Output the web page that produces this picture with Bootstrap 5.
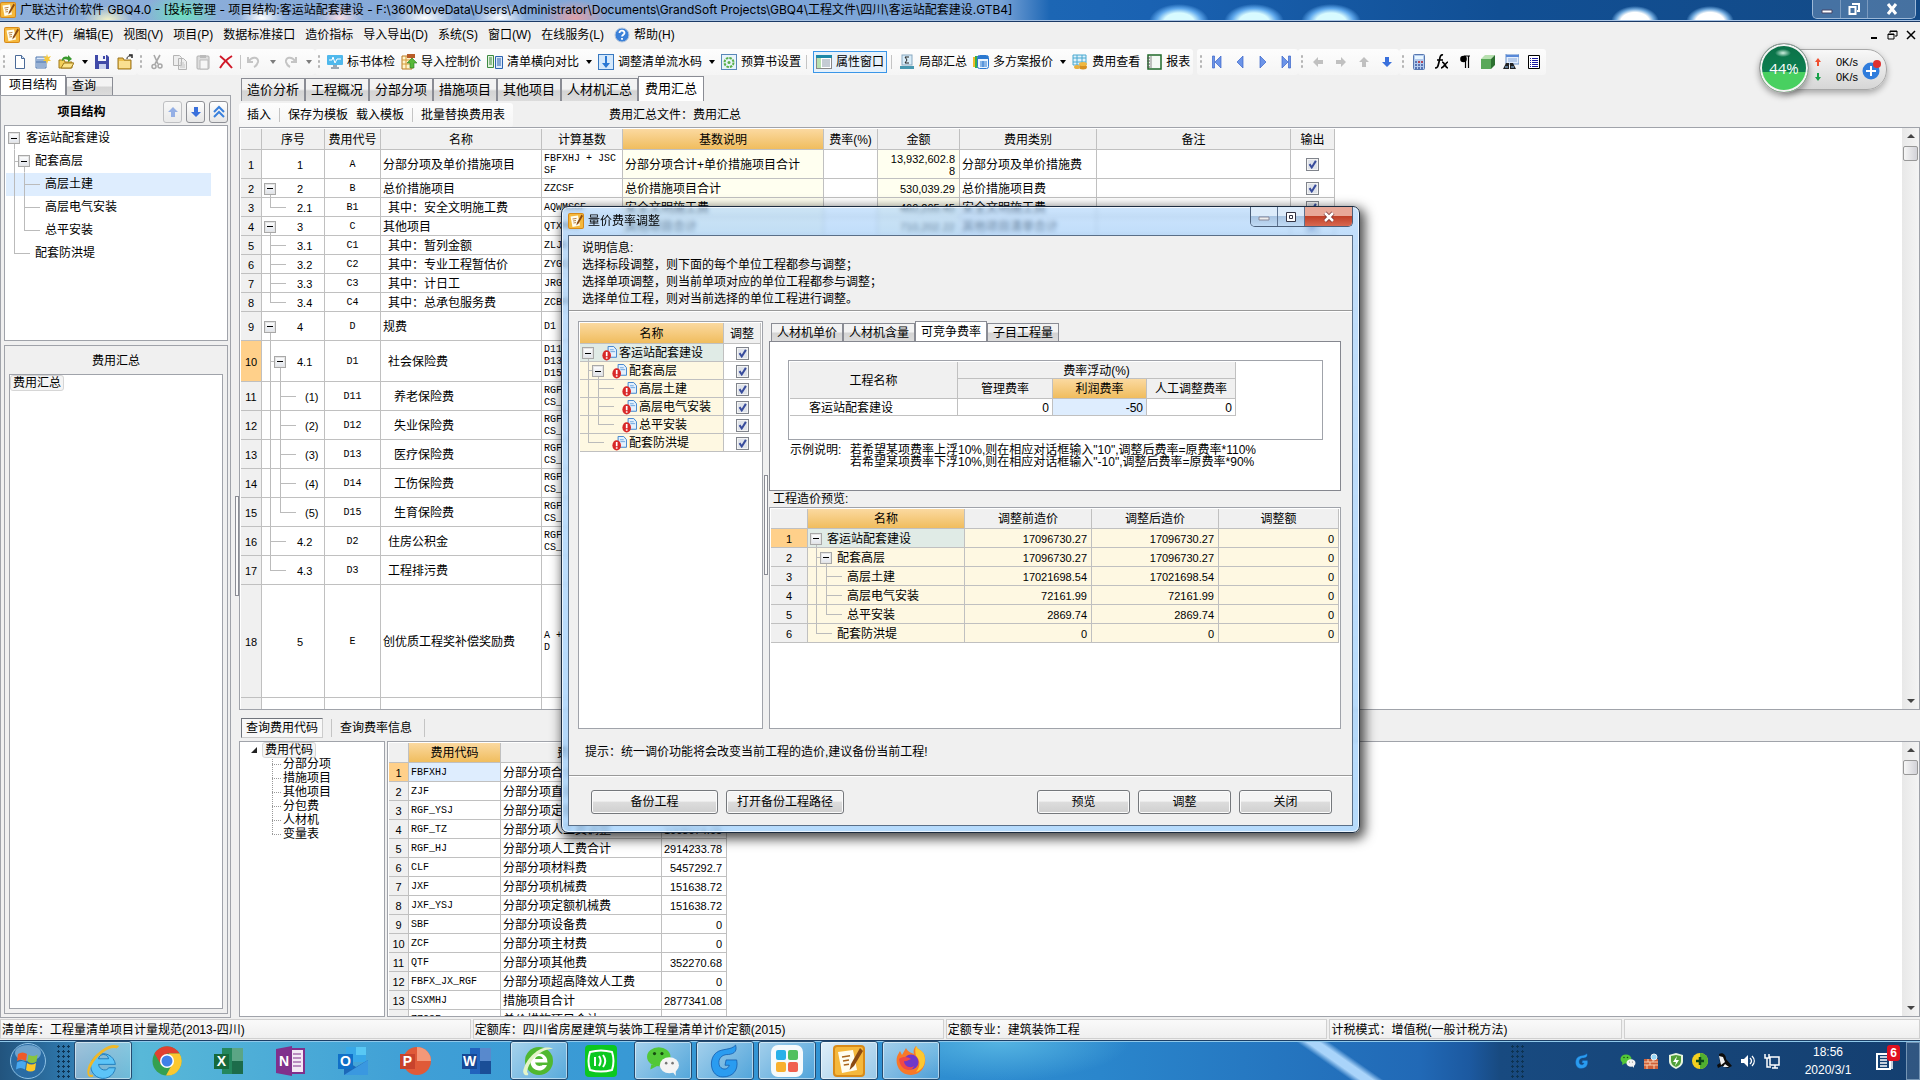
<!DOCTYPE html>
<html lang="zh-CN">
<head>
<meta charset="utf-8">
<meta name="viewport" content="width=device-width, initial-scale=1">
<title>广联达计价软件 GBQ4.0</title>
<link href="https://cdn.jsdelivr.net/npm/bootstrap@5.3.0/dist/css/bootstrap.min.css" rel="stylesheet">
<style>
:root{--line:#c0c0c0;--edge:#a0a3aa;--face:#f0f0f0}
body{font:12px/16px "Liberation Sans","Noto Sans CJK SC",sans-serif;color:#000;background:var(--face);overflow:hidden}
button{font:inherit;color:inherit;border:0;background:none;padding:0;white-space:nowrap}
svg{display:block;flex:none}
a{color:inherit;text-decoration:none}
.ic{width:16px;height:16px}
.bx{background:#fff;border:1px solid var(--edge)}
.mono{font-family:"Liberation Mono","Noto Sans CJK SC",monospace;font-size:10px}
.numtx{font-size:11px}
/* title bar */
.titlebar{height:22px;border-bottom:1px solid #1b3a66;box-shadow:inset 0 -1px #a9c4e4;
 background:
 radial-gradient(30px 18px at 1179px 22px,#d8fbff 50%,#5fa8ec 75%,transparent),radial-gradient(30px 18px at 1254px 22px,#d8fbff 50%,#5fa8ec 75%,transparent),radial-gradient(30px 18px at 1331px 22px,#d8fbff 50%,#5fa8ec 75%,transparent),
 radial-gradient(24px 16px at 1635px 22px,#fff 60%,#6fa8dc 80%,transparent),radial-gradient(24px 16px at 1710px 22px,#fff 60%,#6fa8dc 80%,transparent),
 radial-gradient(26px 14px at 108px 20px,#f3f2c8,transparent),radial-gradient(38px 22px at 182px 14px,#6fe0c0,transparent),radial-gradient(24px 14px at 262px 18px,#fff,transparent),radial-gradient(24px 14px at 340px 18px,#f5dde6,transparent),radial-gradient(30px 14px at 425px 18px,#fff,transparent),radial-gradient(26px 14px at 500px 18px,#fff,transparent),radial-gradient(34px 18px at 575px 18px,#e0a0a8,transparent),
 linear-gradient(90deg,#8fb0da 0,#84a8d8 500px,#7aa4d8 1000px,#1c66b4 1050px,#1a62b2 1150px,#114f94 1500px,#134a86 100%)}
.caption{font-family:Inter,"Noto Sans CJK SC",sans-serif}
.winctl{align-self:flex-start;height:19px;border:1px solid #9db9d8;border-top:0;border-radius:0 0 5px 5px;overflow:hidden}
.winctl button{display:grid;place-items:center;height:18px;background:rgba(255,255,255,.22);border-right:1px solid #7b9bc0}
.winctl button:last-child{border:0}
/* menu and tool bars */
.menubar{height:28px}
.menus{gap:10px}
.toolrow{height:26px}
.strip{background:linear-gradient(#fdfdfd,#f5f5f5);border-radius:3px;height:26px}
.grip{width:9px;height:16px;background:radial-gradient(circle,#b4b4b4 1px,transparent 1.5px) 2px 0/4px 5px repeat-y;flex:none}
.tb{display:flex;align-items:center;gap:4px;padding:0 3px;height:22px}
.tb.only{padding:0 4px 0 3px}
.tb.on{border:1px solid #3a96e8;background:#e6f1fb;padding:0 2px}
.caret{width:13px;height:22px;display:grid;place-items:center}
.caret::before{content:"";border:3px solid transparent;border-top:4px solid #000;border-bottom:0}
.vsep{width:1px;height:14px;background:#c4c4c4}
.vsep.tight{margin:0 2px}
/* tabs */
.tab{font-size:13px;line-height:16px;padding:0 5px;height:23px;border:1px solid #8a8c94;border-bottom:0;background:linear-gradient(#f3f3f3 45%,#d4d4d4 55%,#dcdcdc)}
.tab.on{background:#fff;height:25px;padding:0 6px}
.tab.sm{font-size:12px;height:18px}
.tab.sm.on{height:20px;padding:0 5px}
/* side panel */
.side{width:231px}
.sidebox{border:1px solid var(--edge);padding:5px 2px 3px 3px}
.sidehead{padding-bottom:2px}
.sqb{width:19px;height:22px;border:1px solid #8e9096;border-radius:3px;background:linear-gradient(#fff,#e6e6e6);display:grid;place-items:center}
.split{width:4px;height:100px;border:1px solid #8a8c94;background:#fafafa;align-self:center}
/* trees: --a is the x of the first guide line */
.tree{--g:linear-gradient(#bbb,#bbb);--a:8px;--b:calc(var(--a) + 10px);background-repeat:no-repeat}
.t-top{background-image:var(--g);background-size:1px 50%;background-position:var(--a) 100%}
.t-mid{background-image:var(--g),var(--g);background-size:1px 100%,16px 1px;background-position:var(--a) 0,var(--a) 50%}
.t-end{background-image:var(--g),var(--g);background-size:1px 50%,16px 1px;background-position:var(--a) 0,var(--a) 50%}
.t-sub{background-image:var(--g),var(--g),var(--g);background-size:1px 100%,6px 1px,1px 50%;background-position:var(--a) 0,var(--a) 50%,var(--b) 100%}
.t-mid2{background-image:var(--g),var(--g),var(--g);background-size:1px 100%,1px 100%,16px 1px;background-position:var(--a) 0,var(--b) 0,var(--b) 50%}
.t-end2{background-image:var(--g),var(--g),var(--g);background-size:1px 100%,1px 50%,16px 1px;background-position:var(--a) 0,var(--b) 0,var(--b) 50%}
.tgl{width:12px;height:12px;border:1px solid #a8a8a8;outline:1px solid #e4e4e4;outline-offset:-2px;background:linear-gradient(#000,#000) 50% 50%/6px 1px no-repeat,linear-gradient(#fff,#dfe3ea);flex:none}
.row23{height:23px;display:flex;align-items:center;padding-right:4px}
.lead0,.lead1,.lead2{display:inline-flex;align-items:center;flex:none;padding-left:2px}
.ptree{height:216px;padding:1px 16px 0 1px}
.ptree .lead0{width:20px}.ptree .lead1{width:29px;padding-left:12px}.ptree .lead2{width:39px}
/* grids */
.gtab{table-layout:fixed;border-collapse:separate;border-spacing:0;line-height:12px}
.gtab th{font-weight:400;text-align:center;background:#f0f0f0}
.gtab th,.gtab td{border:0 solid var(--line);border-width:0 1px 1px 0;padding:1px 2px 0;overflow:hidden;white-space:nowrap;vertical-align:middle}
.gtab thead th.hot{background:linear-gradient(#fbd9a0,#f0bd5e)}
.gtab tbody th.hot{background:#ffd08a}
.gtab .c{text-align:center}.gtab .r{text-align:right;padding-right:4px}
.gtab .i1{padding-left:7px}.gtab .i2{padding-left:13px}
.gtab .cream{background-color:#fffff0}
.fees .lead0,.fees .lead1{width:35px}.fees .lead2{width:43px}.fees .lead1{padding-left:12px}
.fees td.tree{padding:1px 0 0}
.cell{display:flex;align-items:center}
.h19 tr{height:19px}
.gtab thead .h20{height:20px}.gtab thead .h21{height:21px}
.fees .h19r{height:19px}.fees .h29{height:29px}.fees .h41{height:41px}.fees .h113{height:113px}
.form-check-input[type=checkbox]{width:13px;height:13px;margin:0 auto;border:1px solid #80848c;border-radius:0;box-shadow:inset 0 0 0 1px #f4f4f4;display:block;float:none}
.form-check-input:checked[type=checkbox]{background:#dfe3ea url("data:image/svg+xml,%3Csvg xmlns='http://www.w3.org/2000/svg' viewBox='0 0 13 13'%3E%3Cpath d='M3 6 5.600 10 10.500 2.200' fill='none' stroke='%23384c9c' stroke-width='2.400'/%3E%3C/svg%3E") center/11px 11px no-repeat;border-color:#80848c}
.vscroll{width:17px;background:linear-gradient(90deg,#e8e8e8,#f4f4f4);display:flex;flex-direction:column;align-items:center;padding:6px 0}
.vscroll i{border:4px solid transparent}
.vscroll .up{border-bottom-color:#444;border-top:0}
.vscroll .dn{border-top-color:#444;border-bottom:0;margin-top:auto}
.vscroll b{width:15px;height:15px;border:1px solid #989898;border-radius:2px;background:linear-gradient(90deg,#f6f6f6,#d2d2d8);margin-top:8px}
/* lower area */
.qbar{height:32px;padding:6px 0 0 2px}
.qon{border:1px solid #70747c;border-right-color:#ccc;border-bottom-color:#ccc;background:#f8f8f8;height:20px;padding:0 4px}
.lower{height:276px}
.codes{width:146px;line-height:14px;padding:0 0 0 6px}
.codes .kids{margin:-1px 0 0 21px}
.kids div{padding-left:16px;height:14px;background:repeating-linear-gradient(#999 0 1px,transparent 1px 2px) 5px 0/1px 14px no-repeat,repeating-linear-gradient(90deg,#999 0 1px,transparent 1px 2px) 5px 7px/9px 1px no-repeat}
.kids div:last-child{background-size:1px 7px,9px 1px}
.pick{border:1px solid #d6d6d6;border-radius:3px;background:#f4f4f4;padding:0 2px}
/* status */
.status{height:22px;padding:1px 0}
.status div{border:1px solid #d0d0d0;background:linear-gradient(#fafafa,#efefef);padding:0 1px;line-height:20px}
/* taskbar */
.taskbar{height:40px;border-top:1px solid #1c3f66;box-shadow:inset 0 1px #8fc8ea;color:#fff;
 background:linear-gradient(35deg,transparent 42%,#a9d4fa 47% 53%,transparent 58%) 1265px 0/150px 40px no-repeat,
 radial-gradient(130px 40px at 1000px 0,#55b4e2,transparent),
 linear-gradient(90deg,#22547e 0,#2f79ae 70px,#58b8d8 140px,#3f9fd6 420px,#3294d4 800px,#2a86cc 1100px,#2169b6 1420px,#1c59a0 1470px,#184a80 1500px,#143f70 100%)}
.tk{width:58px;height:39px;margin-right:4px;display:grid;place-items:center;border:1px solid transparent;border-radius:3px}
.tk.run{border-color:#244b70;background:linear-gradient(135deg,rgba(255,255,255,.55),rgba(255,255,255,.15));box-shadow:inset 0 0 0 1px rgba(255,255,255,.5)}
.tk.act{background:linear-gradient(135deg,rgba(255,255,255,.85),rgba(255,255,255,.5))}
.tk.stack{margin-right:6px}
.dots{width:14px;height:34px;background:radial-gradient(circle,#0d3352 1px,transparent 1.4px) 0 0/5px 5px;flex:none}
.badge6{position:absolute;right:-6px;top:-6px;width:13px;height:16px;background:#e01020;border-radius:3px;font-weight:700;text-align:center;line-height:16px}
/* dialog */
.dlg{position:absolute;left:561px;top:206px;width:799px;height:627px;border:1px solid #1c2c40;border-radius:7px;padding:0 6px 6px;
 background:linear-gradient(rgba(160,204,248,.55),rgba(160,204,248,.65) 30px,rgba(164,210,252,.8));
 backdrop-filter:blur(2px);box-shadow:inset 0 0 0 1px rgba(255,255,255,.7),3px 4px 12px 2px rgba(0,0,0,.7)}
.dlgtitle{height:28px}
.dlgctl{align-self:flex-start;border:1px solid #4b5f7a;border-top:0;border-radius:0 0 5px 5px;overflow:hidden}
.dlgctl button{height:19px;width:27px;display:grid;place-items:center;border-right:1px solid #5c7290;background:linear-gradient(#dcebfa 45%,#a8c4e2 50%,#c0daf4)}
.dlgctl .x{width:47px;border:0;background:linear-gradient(#e8a898 45%,#c04028 50%,#d86850)}
.client{background:var(--face);border:1px solid #5a6f88;flex:1;min-height:0}
.info{line-height:17px;height:75px;padding:4px 0 0 13px;border-bottom:1px solid #999;box-shadow:0 1px #fff}
.panes{padding:10px 11px 0 9px;height:418px}
.dtree{width:185px}
.dtree tbody tr{height:18px}
.dtree .lead0{width:21px}.dtree .lead1{width:31px;padding-left:12px}.dtree .lead2{width:41px}
.dtree td.tree,.ptab td.tree{background-color:#fef8e2;padding:1px 0 0}
.dtree .ic{width:15px;height:15px;margin:0 2px 0 1px}
.dtree td.tree.sel,.ptab td.tree.sel{background-color:#e0ebe6}
.ptab td{background-color:#fef8e2}
.ptab .lead0{width:19px}.ptab .lead1{width:29px;padding-left:12px}.ptab .lead2{width:39px}
.cellin{width:100%;border:0;background:none;padding:0 1px;text-align:right;font:inherit;line-height:12px;height:14px;display:block}
.pb{height:24px;border:1px solid #75787c;border-radius:3px;background:linear-gradient(#f4f4f4 45%,#dcdcdc 52%,#cfcfcf);box-shadow:inset 0 0 0 1px #fbfbfb}
.w93{width:93px}.w118{width:118px}.w127{width:127px}
/* speed widget */
.speed{position:absolute;left:1759px;top:43px;width:130px}
.pill{height:41px;margin:6px 2px 0 24px;border:1px solid #a8a8a8;border-radius:0 20px 20px 0;background:linear-gradient(#f8f8f8,#d6d6d6);box-shadow:0 3px 6px rgba(0,0,0,.3);padding:0 4px 0 30px;line-height:15px;font-size:11px}
.ball{position:absolute;left:0;top:0;width:50px;height:50px;border-radius:50%;border:1px solid #999;box-shadow:inset 0 0 0 2px #f4f4f4,0 3px 6px rgba(0,0,0,.35);background:radial-gradient(8px 4px at 23px 9px,#d0f0e0,transparent),linear-gradient(#0c7048 0,#0c8050 58%,#48d060 58%);color:#fff;font:15px/48px "Open Sans",sans-serif;text-align:center}
</style>
</head>
<body>
<svg width="0" height="0" class="position-absolute" aria-hidden="true">
<defs>
<symbol id="app" viewBox="0 0 16 16"><rect width="16" height="16" rx="2" fill="#d88a18"/><rect x="1" y="1" width="14" height="14" rx="1" fill="#f5b83c"/><path d="M2.500 3.500 10 2.500l2 10-7.500 1.500z" fill="#fffdf0"/><path d="m4.500 6 4-.6M5 8l3-.5M5.400 10l2.600-.4" stroke="#a8641c" stroke-width=".8"/><path d="M13.500 1.500 9 9.500l-.7 3 2.200-2L15 3z" fill="#8a4a12"/></symbol>
<symbol id="doc" viewBox="0 0 16 16"><path d="M3.500 1.500h6l3 3v10h-9z" fill="#fff" stroke="#4a6a98"/><path d="M9.500 1.500v3h3" fill="#cfe0f4" stroke="#4a6a98"/></symbol>
<symbol id="cal" viewBox="0 0 16 16"><path d="M1 3h10v11H1z" fill="#dce8f8" stroke="#5078b0"/><path d="M3 5v8M5 5v8M7 5v8M9 5v8M1 8h10" stroke="#5078b0"/><path d="m12 0 1 3 3-1-2 3 2 2-3 0-1 3-1-3-3 0 2-2-2-3 3 1z" fill="#f5c83c"/></symbol>
<symbol id="open" viewBox="0 0 16 16"><path d="M1 6h5l1 2h7v6H1z" fill="#f3cf58" stroke="#a07818"/><path d="m3 14 3-5h10l-3 5z" fill="#fbe48c" stroke="#a07818"/><path d="M4 5c1-3 5-3 6-2V1l4 4-4 3V6C8 5 6 5 4 7z" fill="#3a9a30"/></symbol>
<symbol id="save" viewBox="0 0 16 16"><path d="M1 1h12l2 2v12H1z" fill="#3f49a8"/><path d="M4 1h8v6H4z" fill="#f4f6fc"/><path d="M5 10h7v5H5z" fill="#c8d0ee"/><path d="M9 2h2v3H9z" fill="#3f49a8"/></symbol>
<symbol id="fold" viewBox="0 0 16 16"><path d="M1 4h5l1 2h7v9H1z" fill="#edc050" stroke="#9a7420"/><path d="M2 7h11v7H2z" fill="#fadf90"/><path d="M12 1h3v3" fill="none" stroke="#222" stroke-width="1.500"/><path d="M10 5c0-3 2-3 4-3" fill="none" stroke="#222"/></symbol>
<symbol id="cut" viewBox="0 0 16 16"><path d="m5 1 4 9M11 1 6 10" stroke="#a8a8a8" stroke-width="1.600"/><circle cx="5" cy="12.500" r="2" fill="none" stroke="#a8a8a8" stroke-width="1.500"/><circle cx="11" cy="12" r="2" fill="none" stroke="#a8a8a8" stroke-width="1.500"/></symbol>
<symbol id="copy" viewBox="0 0 16 16"><path d="M1.500 1.500h6l2 2v8h-8zM6.500 4.500h5l3 3v8h-8z" fill="#eee" stroke="#b4b4b4"/><path d="M8 9h4M8 11h5M8 13h5" stroke="#c4c4c4"/></symbol>
<symbol id="paste" viewBox="0 0 16 16"><rect x="2" y="2" width="12" height="13" rx="1" fill="#ddd" stroke="#b0b0b0"/><path d="M5 1h6v3H5z" fill="#bbb"/><path d="M5 6h8v9H5z" fill="#f6f6f6" stroke="#bbb"/></symbol>
<symbol id="del" viewBox="0 0 16 16"><path d="M2 2c4 3 8 7 12 12M14 2C9 5 5 9 2 14" fill="none" stroke="#d01828" stroke-width="2"/></symbol>
<symbol id="undo" viewBox="0 0 16 16"><path d="M2 3v5h5" fill="none" stroke="#c4c4c4" stroke-width="2"/><path d="M3 7c3-5 10-4 9 1-.5 2-2 4-4 5" fill="none" stroke="#c4c4c4" stroke-width="2"/></symbol>
<symbol id="pc" viewBox="0 0 16 16"><rect x="0" y="1" width="16" height="10" rx="1" fill="#4fb8ec"/><path d="M2 6h3l1-3 2 6 2-4h4" stroke="#fff" fill="none"/><path d="M6 11h4v2h2v2H4v-2h2z" fill="#9aa8b4"/></symbol>
<symbol id="imp" viewBox="0 0 16 16"><path d="M1 2h10v13H1z" fill="#fff4cc" stroke="#b87820"/><path d="M1 6h10M1 10h10M5 2v13" stroke="#d49a38"/><path d="M6 0h8v4H6z" fill="#b85c28"/><path d="M9 14V9H6l5-5 5 5h-3v5z" fill="#58b838" stroke="#2c7820" stroke-width=".6"/></symbol>
<symbol id="cmp" viewBox="0 0 16 16"><path d="M.5 1.500h6v12h-6z" fill="#e4f2e0" stroke="#3c8a40"/><path d="M2 4h3M2 6h3M2 8h3M2 10h3" stroke="#3c8a40"/><path d="M8.500 2.500h7v12h-7z" fill="#dbe8fa" stroke="#2a62b0"/><path d="M10 5h4M10 7h4M10 9h4M10 11h4" stroke="#2a62b0"/></symbol>
<symbol id="down" viewBox="0 0 16 16"><rect x=".5" y=".5" width="15" height="15" fill="#d4e8fb" stroke="#3878c0"/><path d="M7 2h2v7h3l-4 5-4-5h3z" fill="#2a78d4"/></symbol>
<symbol id="gear" viewBox="0 0 16 16"><rect x=".5" y=".5" width="15" height="15" fill="#e8f3fb" stroke="#5888b8"/><circle cx="8" cy="8.500" r="4.500" fill="none" stroke="#58b048" stroke-width="2" stroke-dasharray="2.500 1"/><circle cx="8" cy="8.500" r="1.500" fill="#58b048"/></symbol>
<symbol id="prop" viewBox="0 0 16 16"><rect x=".5" y="1.500" width="15" height="13" fill="#fff" stroke="#888"/><path d="M0 1h16v3H0z" fill="#1c88a8"/><path d="M1 4h4v10H1z" fill="#b8e0b0"/><path d="M6 6h8M6 8h8M6 10h8M6 12h8" stroke="#8a98a8"/></symbol>
<symbol id="sum" viewBox="0 0 16 16"><rect x="3" y="1" width="10" height="10" fill="#d8ecf8" stroke="#88a8c0"/><path d="M10 3H6l2 3-2 3h4" fill="none" stroke="#222"/><path d="M1 12h14v3H1z" fill="#4898b0"/></symbol>
<symbol id="plan" viewBox="0 0 16 16"><path d="M0 3h5v10H0z" fill="#f0b828"/><path d="M2 2h5v12H2z" fill="#38b048"/><rect x="4.500" y="1.500" width="11" height="13" rx="2" fill="#eaf4fe" stroke="#2a78d0"/><path d="M5 2h10v3H5z" fill="#2a78d0"/><path d="M7 8h7M7 10h7M7 12h7M10 7v6" stroke="#2a78d0"/></symbol>
<symbol id="fee" viewBox="0 0 16 16"><path d="M1 1h13v10H1z" fill="#dff2fb" stroke="#48a8d0"/><path d="M1 4h13M5 1v10M10 1v10M1 8h13" stroke="#48a8d0"/><ellipse cx="11" cy="13" rx="4" ry="2.500" fill="#d89020"/><ellipse cx="11" cy="10" rx="4" ry="2" fill="#f0b840"/><ellipse cx="5" cy="13" rx="3" ry="2" fill="#e8b040"/></symbol>
<symbol id="rep" viewBox="0 0 16 16"><rect x="2" y="1" width="13" height="14" fill="#f4faf4" stroke="#1f6a28" stroke-width="1.500"/><path d="M5 2v12" stroke="#888"/><path d="M1 4h3M1 7h3M1 10h3M1 13h3" stroke="#555"/></symbol>
<symbol id="first" viewBox="0 0 16 16"><path d="M3.500 2h2v12h-2zM12 2v12L6 8z" fill="#6c94e8" stroke="#3a64c8" stroke-width=".7"/></symbol>
<symbol id="prev" viewBox="0 0 16 16"><path d="M11 2v12L5 8z" fill="#6c94e8" stroke="#3a64c8" stroke-width=".7"/></symbol>
<symbol id="arr" viewBox="0 0 16 16"><path d="m8 3 5 5h-3v5H6V8H3z"/></symbol>
<symbol id="calc" viewBox="0 0 16 16"><rect x="2.500" y=".5" width="11" height="15" rx="1" fill="#b4cbee" stroke="#5878b0"/><path d="M4 2h8v3H4z" fill="#e8f6ff"/><path d="M4 8h8M4 11h8M4 14h8" stroke="#3a58a0" stroke-width="1.600" stroke-dasharray="2 1"/><path d="M7 8h2M10 8h2" stroke="#d03838" stroke-width="1.600"/></symbol>
<symbol id="fx" viewBox="0 0 16 16"><path d="M9 1c-3-1-3 3-4 7s-1 6-4 6M3 6h6M8 8c3 0 3 6 6 6M14 8c-2 0-4 6-7 6" fill="none" stroke="#000" stroke-width="1.700"/></symbol>
<symbol id="para" viewBox="0 0 16 16"><path d="M13 2H7M8.500 2v12M11.500 2v12" fill="none" stroke="#000" stroke-width="1.200"/><circle cx="6.500" cy="5" r="3.300"/></symbol>
<symbol id="cube" viewBox="0 0 16 16"><path d="M1 5h10v10H1z" fill="#58a858"/><path d="m1 5 4-4h10l-4 4z" fill="#b8e0b0"/><path d="m11 5 4-4v10l-4 4z" fill="#2c7030"/></symbol>
<symbol id="bino" viewBox="0 0 16 16"><path d="M3 0h13v10H3z" fill="#e4eefc" stroke="#6890c8"/><path d="M3 1h13v2H3z" fill="#5888d8"/><path d="M5 5h9M5 7h9" stroke="#88a8d8"/><path d="M0 15 3 9h3v6zM7 15V9h3l3 6z" fill="#222"/><path d="M2 13h3M8 13h3" stroke="#9cf"/></symbol>
<symbol id="list" viewBox="0 0 16 16"><path d="M2.500 1.500h11v13h-11z" fill="#fff" stroke="#000"/><path d="M4 4.500h1M6 4.500h6M4 6.500h1M6 6.500h6M4 8.500h1M6 8.500h6M4 10.500h1M6 10.500h6M4 12.500h1M6 12.500h6" stroke="#1818a0"/></symbol>
<symbol id="help" viewBox="0 0 16 16"><circle cx="8" cy="8" r="7" fill="#3a80d8" stroke="#b8c8dc"/><path d="M5.500 6c0-3.500 5-3 5 0 0 1.500-2.500 2-2.500 3.500M8 11v1.800" fill="none" stroke="#fff" stroke-width="1.800"/></symbol>
<symbol id="warn" viewBox="0 0 16 16"><path d="M6.500.5h6L15.500 4v8h-9z" fill="#e2f0fd" stroke="#3a80cc"/><path d="M8.500 4h4M9 6h5" stroke="#6aa4de"/><ellipse cx="5" cy="10" rx="4.600" ry="5.400" fill="#d82828"/><path d="M5 6.500v4.500M5 12v1.500" stroke="#fff" stroke-width="1.800"/></symbol>
<symbol id="gee" viewBox="0 0 32 32"><path d="M26 1c2 7-3 9-9 9-6 1-8 6-6 11 3 4 8 3 9-1h-4l1-5h10c2 10-4 16-13 16C2 31 0 14 8 8 13 4 22 6 26 1z" fill="#2a9cf0" stroke="#1258a8" stroke-width=".7"/></symbol>
<symbol id="wx" viewBox="0 0 32 32"><ellipse cx="12" cy="12" rx="11" ry="9" fill="#52c838"/><path d="m5 19-1 5 6-3z" fill="#52c838"/><circle cx="8" cy="9" r="1.500" fill="#174d10"/><circle cx="15" cy="9" r="1.500" fill="#174d10"/><ellipse cx="22" cy="20" rx="9" ry="7.500" fill="#f4f4f4"/><path d="m25 26 3 4v-6z" fill="#f4f4f4"/><circle cx="19" cy="18" r="1.200" fill="#777"/><circle cx="25" cy="18" r="1.200" fill="#777"/></symbol>
<symbol id="file" viewBox="0 0 32 32"><path d="M9 3h21v26H9z" fill="currentColor" opacity=".85"/><path d="M19 3h11v13H19z" fill="#fff" opacity=".25"/><path d="M19 16h11v13H19z" opacity=".2"/><path d="M1 9h15v15H1z" fill="currentColor"/><path d="M1 9h15v15H1z" opacity=".18"/></symbol>
</defs>
</svg>

<div class="vh-100 d-flex flex-column">
<header class="titlebar d-flex align-items-center">
 <svg class="ic"><use href="#app"/></svg>
 <span class="caption ms-1 text-nowrap flex-grow-1">广联达计价软件 GBQ4.0 - [投标管理 - 项目结构:客运站配套建设 - F:\360MoveData\Users\Administrator\Documents\GrandSoft Projects\GBQ4\工程文件\四川\客运站配套建设.GTB4]</span>
 <div class="winctl d-flex me-1">
  <button style="width:28px" aria-label="最小化"><svg width="12" height="12"><path d="M1 7h10v3H1z" fill="#fff" stroke="#446"/></svg></button>
  <button style="width:27px" aria-label="还原"><svg width="12" height="12"><path d="M4 1h7v7H9M1.500 4h6v7h-6z" fill="none" stroke="#fff" stroke-width="2"/></svg></button>
  <button style="width:47px" aria-label="关闭"><svg width="12" height="12"><path d="m2 1 8 10M10 1 2 11" stroke="#fff" stroke-width="3"/></svg></button>
 </div>
</header>

<nav class="menubar d-flex align-items-center ps-1">
 <svg class="ic"><use href="#app"/></svg>
 <div class="menus d-flex flex-grow-1 ms-1 text-nowrap">
 <a href="#">文件(F)</a><a href="#">编辑(E)</a><a href="#">视图(V)</a><a href="#">项目(P)</a><a href="#">数据标准接口</a><a href="#">造价指标</a><a href="#">导入导出(D)</a><a href="#">系统(S)</a><a href="#">窗口(W)</a><a href="#">在线服务(L)</a>
 <a href="#" class="d-flex gap-1"><svg class="ic"><use href="#help"/></svg>帮助(H)</a></div>
 <div class="d-flex gap-2 pe-1">
  <button aria-label="最小化"><svg width="10" height="10"><path d="M2 8h6" stroke="#000" stroke-width="2"/></svg></button>
  <button aria-label="还原"><svg width="11" height="10"><path d="M3 3V1h7v5H8M3 1.500h7M1 4h6v5H1zM1 4.500h6" fill="none" stroke="#000"/></svg></button>
  <button aria-label="关闭"><svg width="10" height="10"><path d="m1 1 8 8M9 1 1 9" stroke="#000" stroke-width="1.500"/></svg></button>
 </div>
</nav>

<div class="toolrow d-flex">
 <div class="strip d-flex align-items-center"><span class="grip"></span>
  <button class="tb only"><svg class="ic"><use href="#doc"/></svg></button><button class="tb only"><svg class="ic"><use href="#cal"/></svg></button><button class="tb only"><svg class="ic"><use href="#open"/></svg></button><span class="caret"></span><button class="tb only"><svg class="ic"><use href="#save"/></svg></button><button class="tb only"><svg class="ic"><use href="#fold"/></svg></button></div>
 <div class="strip d-flex align-items-center"><span class="grip"></span>
  <button class="tb only"><svg class="ic"><use href="#cut"/></svg></button><button class="tb only"><svg class="ic"><use href="#copy"/></svg></button><button class="tb only"><svg class="ic"><use href="#paste"/></svg></button><button class="tb only"><svg class="ic"><use href="#del"/></svg></button><span class="vsep tight"></span>
  <button class="tb only"><svg class="ic"><use href="#undo"/></svg></button><span class="caret opacity-50"></span><button class="tb only"><svg class="ic" viewBox="0 0 16 16"><use href="#undo" transform="matrix(-1 0 0 1 16 0)"/></svg></button><span class="caret opacity-50"></span></div>
 <div class="strip d-flex align-items-center"><span class="grip"></span>
  <button class="tb"><svg class="ic"><use href="#pc"/></svg>标书体检</button><button class="tb"><svg class="ic"><use href="#imp"/></svg>导入控制价</button><button class="tb"><svg class="ic"><use href="#cmp"/></svg>清单横向对比</button><span class="caret"></span><button class="tb"><svg class="ic"><use href="#down"/></svg>调整清单流水码</button><span class="caret"></span><button class="tb"><svg class="ic"><use href="#gear"/></svg>预算书设置</button><span class="vsep tight"></span>
  <button class="tb on ms-1"><svg class="ic"><use href="#prop"/></svg>属性窗口</button><span class="vsep mx-1"></span>
  <button class="tb"><svg class="ic"><use href="#sum"/></svg>局部汇总</button><button class="tb"><svg class="ic"><use href="#plan"/></svg>多方案报价</button><span class="caret"></span><button class="tb"><svg class="ic"><use href="#fee"/></svg>费用查看</button><button class="tb"><svg class="ic"><use href="#rep"/></svg>报表</button></div>
 <div class="strip d-flex align-items-center ms-1"><span class="grip"></span>
  <button class="tb only"><svg class="ic"><use href="#first"/></svg></button><button class="tb only"><svg class="ic"><use href="#prev"/></svg></button><button class="tb only"><svg class="ic" viewBox="0 0 16 16"><use href="#prev" transform="rotate(180 8 8)"/></svg></button><button class="tb only"><svg class="ic" viewBox="0 0 16 16"><use href="#first" transform="rotate(180 8 8)"/></svg></button></div>
 <div class="strip d-flex align-items-center" style="fill:#c0c0c0"><span class="grip"></span>
  <button class="tb only"><svg class="ic" viewBox="0 0 16 16"><use href="#arr" transform="rotate(-90 8 8)"/></svg></button><button class="tb only"><svg class="ic" viewBox="0 0 16 16"><use href="#arr" transform="rotate(90 8 8)"/></svg></button><button class="tb only"><svg class="ic"><use href="#arr"/></svg></button><button class="tb only" style="fill:#3a70dc"><svg class="ic" viewBox="0 0 16 16"><use href="#arr" transform="rotate(180 8 8)"/></svg></button></div>
 <div class="strip d-flex align-items-center"><span class="grip"></span>
  <button class="tb only"><svg class="ic"><use href="#calc"/></svg></button><button class="tb only"><svg class="ic"><use href="#fx"/></svg></button><button class="tb only"><svg class="ic"><use href="#para"/></svg></button><button class="tb only"><svg class="ic"><use href="#cube"/></svg></button><button class="tb only"><svg class="ic"><use href="#bino"/></svg></button><button class="tb only"><svg class="ic"><use href="#list"/></svg></button></div>
</div>

<main class="d-flex flex-grow-1" style="min-height:0">
 <aside class="side d-flex flex-column flex-shrink-0">
  <div class="d-flex align-items-end"><button class="tab sm on px-2">项目结构</button><button class="tab sm pe-3">查询</button></div>
  <div class="sidebox d-flex flex-column flex-grow-1">
   <div class="sidehead d-flex align-items-center gap-1"><b class="flex-grow-1 text-center">项目结构</b>
    <button class="sqb opacity-50" aria-label="上移"><svg class="ic" fill="#3a70dc"><use href="#arr"/></svg></button><button class="sqb" aria-label="下移"><svg class="ic" viewBox="0 0 16 16" fill="#3a70dc"><use href="#arr" transform="rotate(180 8 8)"/></svg></button><button class="sqb" aria-label="折叠"><svg width="14" height="14"><path d="m2 7 5-5 5 5M2 12l5-5 5 5" fill="none" stroke="#3a80dc" stroke-width="2"/></svg></button></div>
   <div class="bx ptree">
    <div class="row23 tree t-top"><span class="lead0"><button class="tgl"></button></span>客运站配套建设</div>
    <div class="row23 tree t-sub"><span class="lead1"><button class="tgl"></button></span>配套高层</div>
    <div class="row23 tree t-mid2" style="background-color:#deedfe"><span class="lead2"></span>高层土建</div>
    <div class="row23 tree t-mid2"><span class="lead2"></span>高层电气安装</div>
    <div class="row23 tree t-end2"><span class="lead2"></span>总平安装</div>
    <div class="row23 tree t-end"><span class="lead1"></span>配套防洪堤</div>
   </div>
   <div class="bx mt-1 flex-grow-1 d-flex flex-column p-1 pt-0" style="background:#f0f0f0">
    <div class="text-center py-1" style="height:28px;line-height:22px">费用汇总</div>
    <div class="bx flex-grow-1 pt-0 ps-0"><span class="pick">费用汇总</span></div>
   </div>
  </div>
 </aside>
 <div class="split ms-1 me-0 flex-shrink-0"></div>
 <section class="d-flex flex-column flex-grow-1" style="min-width:0">
  <div class="d-flex align-items-end" style="height:27px;padding-left:2px"><button class="tab">造价分析</button><button class="tab">工程概况</button><button class="tab">分部分项</button><button class="tab">措施项目</button><button class="tab">其他项目</button><button class="tab">人材机汇总</button><button class="tab on">费用汇总</button></div>
  <div class="d-flex align-items-center" style="height:27px;padding-top:1px">
   <div class="strip d-flex align-items-center px-2 gap-2" style="height:24px"><button>插入</button><span class="vsep"></span><button>保存为模板</button><button>载入模板</button><span class="vsep"></span><button>批量替换费用表</button></div>
   <span style="margin-left:96px">费用汇总文件：费用汇总</span></div>
  <div class="bx d-flex flex-grow-1 overflow-hidden" style="min-height:0">
   <div class="flex-grow-1 overflow-hidden" style="padding:1px 0 0 1px">
   <table class="gtab fees" style="width:1094px">
    <colgroup><col style="width:21px"><col style="width:63px"><col style="width:56px"><col style="width:161px"><col style="width:81px"><col style="width:201px"><col style="width:54px"><col style="width:82px"><col style="width:137px"><col style="width:194px"><col style="width:44px"></colgroup>
    <thead><tr class="h21"><th></th><th>序号</th><th>费用代号</th><th>名称</th><th>计算基数</th><th class="hot">基数说明</th><th>费率(%)</th><th>金额</th><th>费用类别</th><th>备注</th><th>输出</th></tr></thead>
    <tbody>
    <tr class="h29"><th class="numtx">1</th><td class="tree numtx"><div class="cell"><span class="lead0"></span>1</div></td><td class="c mono">A</td><td>分部分项及单价措施项目</td><td class="mono">FBFXHJ + JSC<br>SF</td><td class="cream">分部分项合计+单价措施项目合计</td><td></td><td class="r numtx cream">13,932,602.8<br>8</td><td>分部分项及单价措施费</td><td></td><td><input type="checkbox" class="form-check-input" checked aria-label="输出"></td></tr>
    <tr class="h19r"><th class="numtx">2</th><td class="tree t-top numtx"><div class="cell"><span class="lead0"><button class="tgl"></button></span>2</div></td><td class="c mono">B</td><td>总价措施项目</td><td class="mono">ZZCSF</td><td class="cream">总价措施项目合计</td><td></td><td class="r numtx cream">530,039.29</td><td>总价措施项目费</td><td></td><td><input type="checkbox" class="form-check-input" checked aria-label="输出"></td></tr>
    <tr class="h19r"><th class="numtx">3</th><td class="tree t-end numtx"><div class="cell"><span class="lead0"></span>2.1</div></td><td class="c mono">B1</td><td class="i1">其中：安全文明施工费</td><td class="mono">AQWMSGF</td><td class="cream">安全文明施工费</td><td></td><td class="r numtx cream">460,205.45</td><td>安全文明施工费</td><td></td><td><input type="checkbox" class="form-check-input" checked aria-label="输出"></td></tr>
    <tr class="h19r"><th class="numtx">4</th><td class="tree t-top numtx"><div class="cell"><span class="lead0"><button class="tgl"></button></span>3</div></td><td class="c mono">C</td><td>其他项目</td><td class="mono">QTXMHJ</td><td class="cream">其他项目合计</td><td></td><td class="r numtx cream">710,202.22</td><td>其他项目清单合计</td><td></td><td><input type="checkbox" class="form-check-input" checked aria-label="输出"></td></tr>
    <tr class="h19r"><th class="numtx">5</th><td class="tree t-mid numtx"><div class="cell"><span class="lead0"></span>3.1</div></td><td class="c mono">C1</td><td class="i1">其中：暂列金额</td><td class="mono">ZLJE</td><td colspan="6"></td></tr>
    <tr class="h19r"><th class="numtx">6</th><td class="tree t-mid numtx"><div class="cell"><span class="lead0"></span>3.2</div></td><td class="c mono">C2</td><td class="i1">其中：专业工程暂估价</td><td class="mono">ZYGCZGJ</td><td colspan="6"></td></tr>
    <tr class="h19r"><th class="numtx">7</th><td class="tree t-mid numtx"><div class="cell"><span class="lead0"></span>3.3</div></td><td class="c mono">C3</td><td class="i1">其中：计日工</td><td class="mono">JRG</td><td colspan="6"></td></tr>
    <tr class="h19r"><th class="numtx">8</th><td class="tree t-end numtx"><div class="cell"><span class="lead0"></span>3.4</div></td><td class="c mono">C4</td><td class="i1">其中：总承包服务费</td><td class="mono">ZCBFWF</td><td colspan="6"></td></tr>
    <tr class="h29"><th class="numtx">9</th><td class="tree t-top numtx"><div class="cell"><span class="lead0"><button class="tgl"></button></span>4</div></td><td class="c mono">D</td><td>规费</td><td class="mono">D1</td><td colspan="6"></td></tr>
    <tr class="h41"><th class="hot numtx">10</th><td class="tree t-sub numtx"><div class="cell"><span class="lead1"><button class="tgl"></button></span>4.1</div></td><td class="c mono">D1</td><td class="i1">社会保险费</td><td class="mono">D11<br>D13<br>D15</td><td colspan="6"></td></tr>
    <tr class="h29"><th class="numtx">11</th><td class="tree t-mid2 numtx"><div class="cell"><span class="lead2"></span>(1)</div></td><td class="c mono">D11</td><td class="i2">养老保险费</td><td class="mono">RGF<br>CS_</td><td colspan="6"></td></tr>
    <tr class="h29"><th class="numtx">12</th><td class="tree t-mid2 numtx"><div class="cell"><span class="lead2"></span>(2)</div></td><td class="c mono">D12</td><td class="i2">失业保险费</td><td class="mono">RGF<br>CS_</td><td colspan="6"></td></tr>
    <tr class="h29"><th class="numtx">13</th><td class="tree t-mid2 numtx"><div class="cell"><span class="lead2"></span>(3)</div></td><td class="c mono">D13</td><td class="i2">医疗保险费</td><td class="mono">RGF<br>CS_</td><td colspan="6"></td></tr>
    <tr class="h29"><th class="numtx">14</th><td class="tree t-mid2 numtx"><div class="cell"><span class="lead2"></span>(4)</div></td><td class="c mono">D14</td><td class="i2">工伤保险费</td><td class="mono">RGF<br>CS_</td><td colspan="6"></td></tr>
    <tr class="h29"><th class="numtx">15</th><td class="tree t-end2 numtx"><div class="cell"><span class="lead2"></span>(5)</div></td><td class="c mono">D15</td><td class="i2">生育保险费</td><td class="mono">RGF<br>CS_</td><td colspan="6"></td></tr>
    <tr class="h29"><th class="numtx">16</th><td class="tree t-mid numtx"><div class="cell"><span class="lead0"></span>4.2</div></td><td class="c mono">D2</td><td class="i1">住房公积金</td><td class="mono">RGF<br>CS_</td><td colspan="6"></td></tr>
    <tr class="h29"><th class="numtx">17</th><td class="tree t-end numtx"><div class="cell"><span class="lead0"></span>4.3</div></td><td class="c mono">D3</td><td class="i1">工程排污费</td><td></td><td colspan="6"></td></tr>
    <tr class="h113"><th class="numtx">18</th><td class="tree numtx"><div class="cell"><span class="lead0"></span>5</div></td><td class="c mono">E</td><td>创优质工程奖补偿奖励费</td><td class="mono">A +<br>D</td><td colspan="6"></td></tr>
    <tr class="h29"><th></th><td></td><td></td><td></td><td></td><td colspan="6"></td></tr>
    </tbody>
   </table></div>
   <div class="vscroll"><i class="up"></i><b></b><i class="dn"></i></div>
  </div>
  <div class="qbar d-flex align-items-center gap-2"><button class="qon">查询费用代码</button><span class="vsep" style="height:18px"></span><button>查询费率信息</button><span class="vsep ms-1" style="height:18px"></span></div>
  <div class="lower d-flex flex-shrink-0">
   <div class="bx codes flex-shrink-0">
    <div class="d-flex align-items-center gap-1"><svg class="ms-1" width="8" height="8"><path d="M7 1v6H1z" fill="#222"/></svg><span class="pick">费用代码</span></div>
    <div class="kids"><div>分部分项</div><div>措施项目</div><div>其他项目</div><div>分包费</div><div>人材机</div><div>变量表</div></div>
   </div>
   <div class="bx d-flex flex-grow-1 overflow-hidden" style="margin-left:2px">
    <div class="flex-grow-1" style="padding:1px 0 0 1px">
    <table class="gtab h19" style="width:338px"><colgroup><col style="width:20px"><col style="width:92px"><col style="width:161px"><col style="width:65px"></colgroup>
     <thead><tr class="h20"><th></th><th class="hot">费用代码</th><th>费用名称</th><th>费用金额</th></tr></thead>
     <tbody>
     <tr><th class="hot numtx">1</th><td class="mono" style="background:#deedfe">FBFXHJ</td><td>分部分项合计</td><td></td></tr>
     <tr><th class="numtx">2</th><td class="mono">ZJF</td><td>分部分项直接费</td><td></td></tr>
     <tr><th class="numtx">3</th><td class="mono">RGF_YSJ</td><td>分部分项定额人工费</td><td></td></tr>
     <tr><th class="numtx">4</th><td class="mono">RGF_TZ</td><td>分部分项人工费调整</td><td class="r numtx">1008074.05</td></tr>
     <tr><th class="numtx">5</th><td class="mono">RGF_HJ</td><td>分部分项人工费合计</td><td class="r numtx">2914233.78</td></tr>
     <tr><th class="numtx">6</th><td class="mono">CLF</td><td>分部分项材料费</td><td class="r numtx">5457292.7</td></tr>
     <tr><th class="numtx">7</th><td class="mono">JXF</td><td>分部分项机械费</td><td class="r numtx">151638.72</td></tr>
     <tr><th class="numtx">8</th><td class="mono">JXF_YSJ</td><td>分部分项定额机械费</td><td class="r numtx">151638.72</td></tr>
     <tr><th class="numtx">9</th><td class="mono">SBF</td><td>分部分项设备费</td><td class="r numtx">0</td></tr>
     <tr><th class="numtx">10</th><td class="mono">ZCF</td><td>分部分项主材费</td><td class="r numtx">0</td></tr>
     <tr><th class="numtx">11</th><td class="mono">QTF</td><td>分部分项其他费</td><td class="r numtx">352270.68</td></tr>
     <tr><th class="numtx">12</th><td class="mono">FBFX_JX_RGF</td><td>分部分项超高降效人工费</td><td class="r numtx">0</td></tr>
     <tr><th class="numtx">13</th><td class="mono">CSXMHJ</td><td>措施项目合计</td><td class="r numtx">2877341.08</td></tr>
     <tr><th class="numtx">14</th><td class="mono">ZZCSF</td><td>单价措施项目合计</td><td class="r numtx">530039.29</td></tr>
     </tbody></table></div>
    <div class="vscroll"><i class="up"></i><b></b><i class="dn"></i></div>
   </div>
  </div>
  <div style="height:1px"></div>
 </section>
</main>

<footer class="status d-flex" style="gap:2px">
 <div style="flex:472">清单库：工程量清单项目计量规范(2013-四川)</div><div style="flex:472">定额库：四川省房屋建筑与装饰工程量清单计价定额(2015)</div><div style="flex:382">定额专业：建筑装饰工程</div><div style="flex:292">计税模式：增值税(一般计税方法)</div><div style="flex:295"></div>
</footer>

<div class="taskbar d-flex align-items-center flex-shrink-0">
 <button style="width:56px" class="d-grid justify-content-center" aria-label="开始"><svg width="38" height="38" viewBox="0 0 38 38"><circle cx="19" cy="19" r="17.500" fill="#2a6ca4" stroke="#8cc0e4"/><ellipse cx="19" cy="11" rx="13" ry="8" fill="#9cc8e8" opacity=".6"/><path d="M9 12c3-2 6-2 9 0l-1 7c-3-2-6-2-9 0z" fill="#f05a28"/><path d="M19.500 12.500c3 2 6 2 9 0l-1 7c-3 2-6 2-9 0z" fill="#88c440"/><path d="M8 20.500c3-2 6-2 9 0l-1 7c-3-2-6-2-9 0z" fill="#48a8f0"/><path d="M18 21c3 2 6 2 9 0l-1 7c-3 2-6 2-9 0z" fill="#fcc828"/></svg></button>
 <span class="dots"></span>
 <button class="tk run stack ms-1" aria-label="IE"><svg width="36" height="36" viewBox="0 0 32 32"><path d="M27 19H12c1 6 8 6 9 3h6a11 11 0 1 1 0-3zM12 14h9c-1-5-8-5-9 0z" fill="#5cc4f8" stroke="#1c78b8" stroke-width=".8"/><path d="M29 3c-8-3-21 8-25 17-2 5-2 10 3 9-5 2-5-3-2-9C9 12 20 2 28 4z" fill="#f8cc30" stroke="#f0b828" stroke-width="1.500"/></svg></button>
 <button class="tk" aria-label="Chrome"><svg width="32" height="32" viewBox="0 0 32 32"><circle cx="16" cy="16" r="14.500" fill="#34a050"/><path d="M3.500 8.500a14.500 14.500 0 0 1 25 0H16l-6 11z" fill="#e04030"/><path d="M28.500 8.500A14.500 14.500 0 0 1 15 30.500l6-11-3-11z" fill="#fcc830"/><circle cx="16" cy="16" r="7" fill="#fff"/><circle cx="16" cy="16" r="5.500" fill="#4080e8"/></svg></button>
 <button class="tk" aria-label="Excel" style="color:#1c8048"><svg width="32" height="32"><use href="#file"/><text x="8.500" y="21" font-size="14" font-weight="700" fill="#fff" text-anchor="middle">X</text></svg></button>
 <button class="tk" aria-label="OneNote" style="color:#80308c"><svg width="32" height="32"><path d="M12 4h17v24H12z" fill="#f4e8f6" stroke="#80308c" stroke-width="2"/><path d="M18 9h8M18 13h8M18 17h8M18 21h8" stroke="#80308c"/><path d="M1 4l16-3v30L1 28z" fill="currentColor"/><text x="9" y="21" font-size="14" font-weight="700" fill="#fff" text-anchor="middle">N</text></svg></button>
 <button class="tk" aria-label="Outlook" style="color:#1070c8"><svg width="32" height="32"><path d="M9 2h20v15H9z" fill="#38a8e8"/><path d="M19 2h10v8H19z" fill="#58c8f4"/><path d="M7 15l12 7 12-7v15H7z" fill="#1c68b8"/><path d="M7 30 31 15v15z" fill="#3a98e0"/><path d="M1 9h15v15H1z" fill="currentColor"/><text x="8.500" y="21" font-size="14" font-weight="700" fill="#fff" text-anchor="middle">O</text></svg></button>
 <button class="tk" aria-label="PowerPoint" style="color:#c8432c"><svg width="32" height="32"><circle cx="18" cy="16" r="14" fill="#e05a38"/><path d="M18 2a14 14 0 0 1 14 14H18z" fill="#f49878"/><path d="M1 9h15v15H1z" fill="currentColor"/><text x="8.500" y="21" font-size="14" font-weight="700" fill="#fff" text-anchor="middle">P</text></svg></button>
 <button class="tk" aria-label="Word" style="color:#1c58b8"><svg width="32" height="32"><use href="#file"/><text x="8.500" y="21" font-size="14" font-weight="700" fill="#fff" text-anchor="middle">W</text></svg></button>
 <button class="tk run" aria-label="360"><svg width="32" height="32" viewBox="0 0 32 32"><circle cx="16" cy="16" r="14" fill="#50b830"/><path d="M24 20a8.500 8.500 0 1 1 0-6l.5 3.500H12c1 4 6 4 7.500 2.500zM12 14h8c-1-4-7-4-8 0z" fill="#fff"/><path d="M30 4C20 3 6 14 4 27c5 5-7 5-3-4C5 11 20-2 30 4z" fill="#e4f4c8"/></svg></button>
 <button class="tk" aria-label="iQIYI"><svg width="32" height="32" viewBox="0 0 32 32"><rect width="32" height="32" rx="4" fill="#0cc820"/><path d="M5 7c7-2 15-2 22 0 2 6 2 12 0 18-7 2-15 2-22 0-2-6-2-12 0-18z" fill="none" stroke="#fff" stroke-width="2"/><path d="M10 12v9M14 11c2 3 2 7 0 10M18 10c3 4 3 8 0 12" fill="none" stroke="#fff" stroke-width="2"/></svg></button>
 <button class="tk run" aria-label="微信"><svg width="34" height="34"><use href="#wx"/></svg></button>
 <button class="tk run" aria-label="广联达"><svg width="34" height="34"><use href="#gee"/></svg></button>
 <button class="tk run" aria-label="应用"><svg width="32" height="32"><rect width="32" height="32" rx="7" fill="#f6fafc"/><rect x="5" y="5" width="10" height="10" rx="2" fill="#28b0e8"/><rect x="17" y="5" width="10" height="10" rx="2" fill="#50c060"/><rect x="5" y="17" width="10" height="10" rx="2" fill="#f8b030"/><rect x="17" y="17" width="10" height="10" rx="2" fill="#f06050"/></svg></button>
 <button class="tk run act" aria-label="GBQ4.0"><svg width="32" height="32"><use href="#app"/></svg></button>
 <button class="tk run" aria-label="Firefox"><svg width="32" height="32" viewBox="0 0 32 32"><path d="M29 9c4 10-2 21-13 21S0 20 2 12c1-3 2-4 3-6l2 4 4-7c1 3 5 5 8 6-1-3 0-6 2-8 2 4 6 4 8 8z" fill="#f87828"/><path d="M29 9c3 9-1 16-8 18 5-6 4-12 0-16-1-4-1-7 0-10 2 4 6 4 8 8z" fill="#fcc830"/><circle cx="16" cy="17" r="7.500" fill="#7038c8"/><path d="M4 14c4-3 9-2 12 0-3 1-5 3-7 2 0 5 6 8 10 5-2 7-14 5-15-7z" fill="#f04848"/></svg></button>
 <span class="dots ms-auto"></span>
 <div class="d-flex align-items-center" style="gap:8px;margin-left:50px">
  <svg class="ic" style="margin-right:22px"><use href="#gee"/></svg>
  <svg class="ic"><use href="#wx"/></svg>
  <svg class="ic" viewBox="0 0 16 16"><path d="M0 6h14v10H0z" fill="#d06038"/><path d="M0 9h14M0 12h14M4 6v3M9 6v3M6 9v3M3 12v4M10 12v4" stroke="#f8d0b0"/><circle cx="10" cy="4" r="3" fill="#98d8f8" stroke="#f0f0f0"/></svg>
  <svg class="ic" viewBox="0 0 16 16"><path d="m8 0 7 2v6c0 4-3 6-7 8-4-2-7-4-7-8V2z" fill="#e8f4e0"/><path d="m8 2 5 1v5c0 3-2 5-5 6-3-1-5-3-5-6V3z" fill="#50a038"/><path d="M9 3 5 9h3l-1 4 4-6H8z" fill="#fff"/></svg>
  <svg class="ic" viewBox="0 0 16 16"><circle cx="8" cy="8" r="8" fill="#f4d020"/><path d="M8 0a8 8 0 0 1 0 16z" fill="#50b030"/><path d="M8 4v8M4 8h8" stroke="#0c4818" stroke-width="2.500"/></svg>
  <svg class="ic" viewBox="0 0 16 16"><path d="M3 1c4-2 7 1 7 5l6 7-4 2-6-2-4 2-1-3 3-2z" fill="#0c0c0c"/><path d="M3 3l4 1 2 5-4 3zM9 11l4 3H7z" fill="#f0f0f0"/></svg>
  <svg class="ic" viewBox="0 0 16 16"><path d="M1 6h3l4-4v12l-4-4H1z" fill="#fff"/><path d="M10 5c2 2 2 4 0 6M12 3c3 3 3 7 0 10" fill="none" stroke="#fff" stroke-width="1.300"/></svg>
  <svg class="ic" viewBox="0 0 16 16"><path d="M6 4h9v8H6zM8 15h6M11 12v3M1 1v4h4V1M3 5v9h4" fill="none" stroke="#fff" stroke-width="1.500"/></svg>
 </div>
 <div class="text-center ms-3" style="width:64px;line-height:18px"><div>18:56</div><div>2020/3/1</div></div>
 <div class="position-relative" style="margin:0 12px 0 16px"><svg width="18" height="20"><path d="M1 3h13v15H1z" fill="none" stroke="#fff" stroke-width="2"/><path d="M4 6h7M4 9h7M4 12h7M4 15h7M16 6v12" stroke="#fff" stroke-width="1.500"/></svg><span class="badge6">6</span></div>
 <button style="width:14px;height:38px;border:1px solid #7494b4;background:rgba(255,255,255,.12)" aria-label="显示桌面"></button>
</div>
</div>

<div class="dlg d-flex flex-column" role="dialog" aria-label="量价费率调整">
 <div class="dlgtitle d-flex align-items-center"><svg class="ic"><use href="#app"/></svg><span class="ms-1 flex-grow-1">量价费率调整</span>
  <div class="dlgctl d-flex"><button aria-label="最小化"><svg width="12" height="12"><path d="M1 6h10v3H1z" fill="#eee" stroke="#889"/></svg></button><button aria-label="最大化"><svg width="12" height="12"><path d="M1.500 1.500h9v9h-9zM4.500 4.500h3v3h-3z" fill="#fff" stroke="#334" /></svg></button><button class="x" aria-label="关闭"><svg width="12" height="12"><path d="m2 2 8 8M10 2l-8 8" stroke="#733" stroke-width="4"/><path d="m2 2 8 8M10 2l-8 8" stroke="#fff" stroke-width="2.500"/></svg></button></div></div>
 <div class="client d-flex flex-column">
  <div class="info">说明信息:<br>选择标段调整，则下面的每个单位工程都参与调整；<br>选择单项调整，则当前单项对应的单位工程都参与调整；<br>选择单位工程，则对当前选择的单位工程进行调整。</div>
  <div class="panes d-flex">
   <div class="bx dtree flex-shrink-0" style="padding:1px">
    <table class="gtab w-100"><colgroup><col><col style="width:37px"></colgroup>
    <thead><tr class="h21"><th class="hot">名称</th><th>调整</th></tr></thead>
    <tbody>
    <tr><td class="tree t-top sel"><div class="cell"><span class="lead0"><button class="tgl"></button></span><svg class="ic"><use href="#warn"/></svg>客运站配套建设</div></td><td><input type="checkbox" class="form-check-input" checked aria-label="客运站配套建设"></td></tr>
    <tr><td class="tree t-sub"><div class="cell"><span class="lead1"><button class="tgl"></button></span><svg class="ic"><use href="#warn"/></svg>配套高层</div></td><td><input type="checkbox" class="form-check-input" checked aria-label="配套高层"></td></tr>
    <tr><td class="tree t-mid2"><div class="cell"><span class="lead2"></span><svg class="ic"><use href="#warn"/></svg>高层土建</div></td><td><input type="checkbox" class="form-check-input" checked aria-label="高层土建"></td></tr>
    <tr><td class="tree t-mid2"><div class="cell"><span class="lead2"></span><svg class="ic"><use href="#warn"/></svg>高层电气安装</div></td><td><input type="checkbox" class="form-check-input" checked aria-label="高层电气安装"></td></tr>
    <tr><td class="tree t-end2"><div class="cell"><span class="lead2"></span><svg class="ic"><use href="#warn"/></svg>总平安装</div></td><td><input type="checkbox" class="form-check-input" checked aria-label="总平安装"></td></tr>
    <tr><td class="tree t-end"><div class="cell"><span class="lead1"></span><svg class="ic"><use href="#warn"/></svg>配套防洪堤</div></td><td><input type="checkbox" class="form-check-input" checked aria-label="配套防洪堤"></td></tr>
    </tbody></table>
   </div>
   <div class="split flex-shrink-0" style="margin:0 1px"></div>
   <div class="d-flex flex-column flex-grow-1">
    <div class="d-flex align-items-end" style="padding-left:2px"><button class="tab sm">人材机单价</button><button class="tab sm">人材机含量</button><button class="tab sm on">可竞争费率</button><button class="tab sm">子目工程量</button></div>
    <div class="bx" style="height:150px;padding:18px 17px 0 18px;border-color:#85878f">
     <div class="bx" style="height:80px;padding:1px">
      <table class="gtab" style="width:446px"><colgroup><col style="width:168px"><col style="width:95px"><col style="width:94px"><col style="width:89px"></colgroup>
      <thead><tr style="height:17px"><th rowspan="2">工程名称</th><th colspan="3">费率浮动(%)</th></tr>
      <tr class="h20"><th>管理费率</th><th class="hot">利润费率</th><th>人工调整费率</th></tr></thead>
      <tbody><tr style="height:17px"><td style="padding-left:19px">客运站配套建设</td><td><input class="cellin" value="0" aria-label="管理费率"></td><td style="background:#deedfe"><input class="cellin" value="-50" aria-label="利润费率"></td><td><input class="cellin" value="0" aria-label="人工调整费率"></td></tr></tbody></table>
     </div>
     <div class="d-flex text-nowrap" style="line-height:12px;padding:4px 0 0 2px"><span style="width:60px">示例说明:</span><span>若希望某项费率上浮10%,则在相应对话框输入"10",调整后费率=原费率*110%<br>若希望某项费率下浮10%,则在相应对话框输入"-10",调整后费率=原费率*90%</span></div>
    </div>
    <div class="ps-1">工程造价预览:</div>
    <div class="bx flex-grow-1" style="padding:1px">
     <table class="gtab ptab h19 w-100"><colgroup><col style="width:37px"><col style="width:157px"><col style="width:127px"><col style="width:127px"><col></colgroup>
     <thead><tr class="h20"><th></th><th class="hot">名称</th><th>调整前造价</th><th>调整后造价</th><th>调整额</th></tr></thead>
     <tbody>
     <tr><th class="hot numtx">1</th><td class="tree t-top sel"><div class="cell"><span class="lead0"><button class="tgl"></button></span>客运站配套建设</div></td><td class="r numtx">17096730.27</td><td class="r numtx">17096730.27</td><td class="r numtx">0</td></tr>
     <tr><th class="numtx">2</th><td class="tree t-sub"><div class="cell"><span class="lead1"><button class="tgl"></button></span>配套高层</div></td><td class="r numtx">17096730.27</td><td class="r numtx">17096730.27</td><td class="r numtx">0</td></tr>
     <tr><th class="numtx">3</th><td class="tree t-mid2"><div class="cell"><span class="lead2"></span>高层土建</div></td><td class="r numtx">17021698.54</td><td class="r numtx">17021698.54</td><td class="r numtx">0</td></tr>
     <tr><th class="numtx">4</th><td class="tree t-mid2"><div class="cell"><span class="lead2"></span>高层电气安装</div></td><td class="r numtx">72161.99</td><td class="r numtx">72161.99</td><td class="r numtx">0</td></tr>
     <tr><th class="numtx">5</th><td class="tree t-end2"><div class="cell"><span class="lead2"></span>总平安装</div></td><td class="r numtx">2869.74</td><td class="r numtx">2869.74</td><td class="r numtx">0</td></tr>
     <tr><th class="numtx">6</th><td class="tree t-end"><div class="cell"><span class="lead1"></span>配套防洪堤</div></td><td class="r numtx">0</td><td class="r numtx">0</td><td class="r numtx">0</td></tr>
     </tbody></table>
    </div>
   </div>
  </div>
  <div class="d-flex align-items-center" style="height:47px;padding-left:16px;border-bottom:1px solid #999;box-shadow:0 1px #fff">提示：统一调价功能将会改变当前工程的造价,建议备份当前工程!</div>
  <div class="d-flex gap-2 flex-grow-1 align-items-start" style="padding:14px 20px 0 22px"><button class="pb w127">备份工程</button><button class="pb w118">打开备份工程路径</button><button class="pb w93 ms-auto">预览</button><button class="pb w93">调整</button><button class="pb w93">关闭</button></div>
 </div>
</div>

<div class="speed"><div class="pill d-flex align-items-center">
 <div class="flex-grow-1"><div class="d-flex justify-content-between align-items-center"><svg width="8" height="8"><path d="M4 0l3 4H5v4H3V4H1z" fill="#f05030"/></svg><span>0K/s</span></div><div class="d-flex justify-content-between align-items-center"><svg width="8" height="8"><path d="M4 8l3-4H5V0H3v4H1z" fill="#18a048"/></svg><span>0K/s</span></div></div>
 <svg class="ms-1" width="20" height="22"><circle cx="9" cy="12" r="8.500" fill="#2f7cdc"/><path d="M9 7v10M4 12h10" stroke="#fff" stroke-width="2"/><circle cx="15" cy="5" r="4" fill="#e03030"/></svg></div>
 <div class="ball">44%</div></div>

<script src="https://cdn.jsdelivr.net/npm/bootstrap@5.3.0/dist/js/bootstrap.bundle.min.js"></script>
</body>
</html>
